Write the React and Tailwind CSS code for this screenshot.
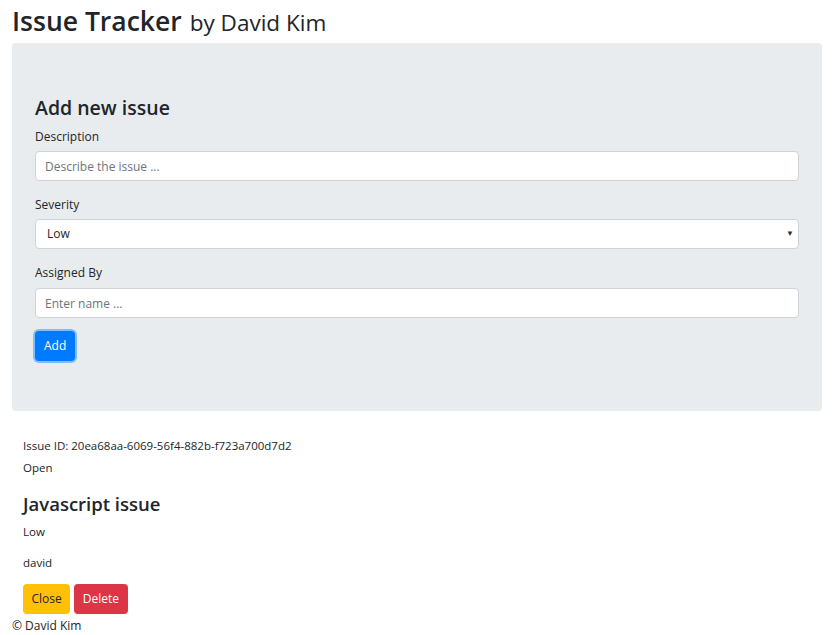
export default function App() {
  return (
    <div className="min-h-[635px] bg-white font-['Open_Sans',sans-serif] text-[#212529]">
      <div className="pr-[17px] pl-3">
        <h1 className="flex items-baseline gap-2 pt-[2px] text-[26.5px] leading-[38px] font-semibold">
          Issue Tracker <small className="text-[22.5px] font-normal">by David Kim</small>
        </h1>

        <div className="mt-[1px] rounded bg-[#e9ecef] px-[23px] pt-[52px] pb-[50px]">
          <h3 className="text-[19.5px] leading-[26px] font-semibold">Add new issue</h3>
          <form className="mt-[6px]" onSubmit={(e) => e.preventDefault()}>
            <div className="mb-[14px]">
              <label className="block pb-[5px] text-[12px] leading-[19px]">Description</label>
              <input
                type="text"
                placeholder="Describe the issue ..."
                className="block h-[30px] w-full rounded border border-[#ced4da] bg-white px-[9px] text-[12px] placeholder:text-[#6c757d]"
              />
            </div>
            <div className="mb-[14px]">
              <label className="block pb-[5px] text-[12px] leading-[19px]">Severity</label>
              <div className="relative">
                <select className="block h-[30px] w-full appearance-none rounded border border-[#ced4da] bg-white px-[11px] text-[12px]">
                  <option>Low</option>
                  <option>Medium</option>
                  <option>High</option>
                </select>
                <span className="pointer-events-none absolute top-[8px] right-[5px] text-[8px] text-[#333]">▼</span>
              </div>
            </div>
            <div className="mb-[13px]">
              <label className="block pb-[6px] text-[12px] leading-[19px]">Assigned By</label>
              <input
                type="text"
                placeholder="Enter name ..."
                className="block h-[30px] w-full rounded border border-[#ced4da] bg-white px-[9px] text-[12px] placeholder:text-[#6c757d]"
              />
            </div>
            <button
              type="submit"
              className="h-[30px] rounded bg-[#007bff] px-[9px] text-[12px] text-white ring-[2px] ring-[#80bdff]"
            >
              Add
            </button>
          </form>
        </div>

        <div className="px-[11px] pt-[25px]">
          <h6 className="text-[11.5px] leading-[20px]">Issue ID: 20ea68aa-6069-56f4-882b-f723a700d7d2</h6>
          <p className="mt-[2px] text-[11.5px] leading-[20px]">Open</p>
          <h3 className="mt-[14px] text-[18.5px] leading-[24px] font-semibold">Javascript issue</h3>
          <p className="mt-[6px] text-[11.5px] leading-[20px]">Low</p>
          <p className="mt-[11px] text-[11.5px] leading-[20px]">david</p>
          <div className="mt-[11px] flex gap-1">
            <button className="h-[30px] rounded bg-[#ffc107] px-[8.5px] text-[12px] text-[#212529]">Close</button>
            <button className="h-[30px] rounded bg-[#dc3545] px-[8.5px] text-[12px] text-white">Delete</button>
          </div>
        </div>
        <footer className="mt-[4px] text-[12px] leading-[16px]">© David Kim</footer>
      </div>
    </div>
  )
}
